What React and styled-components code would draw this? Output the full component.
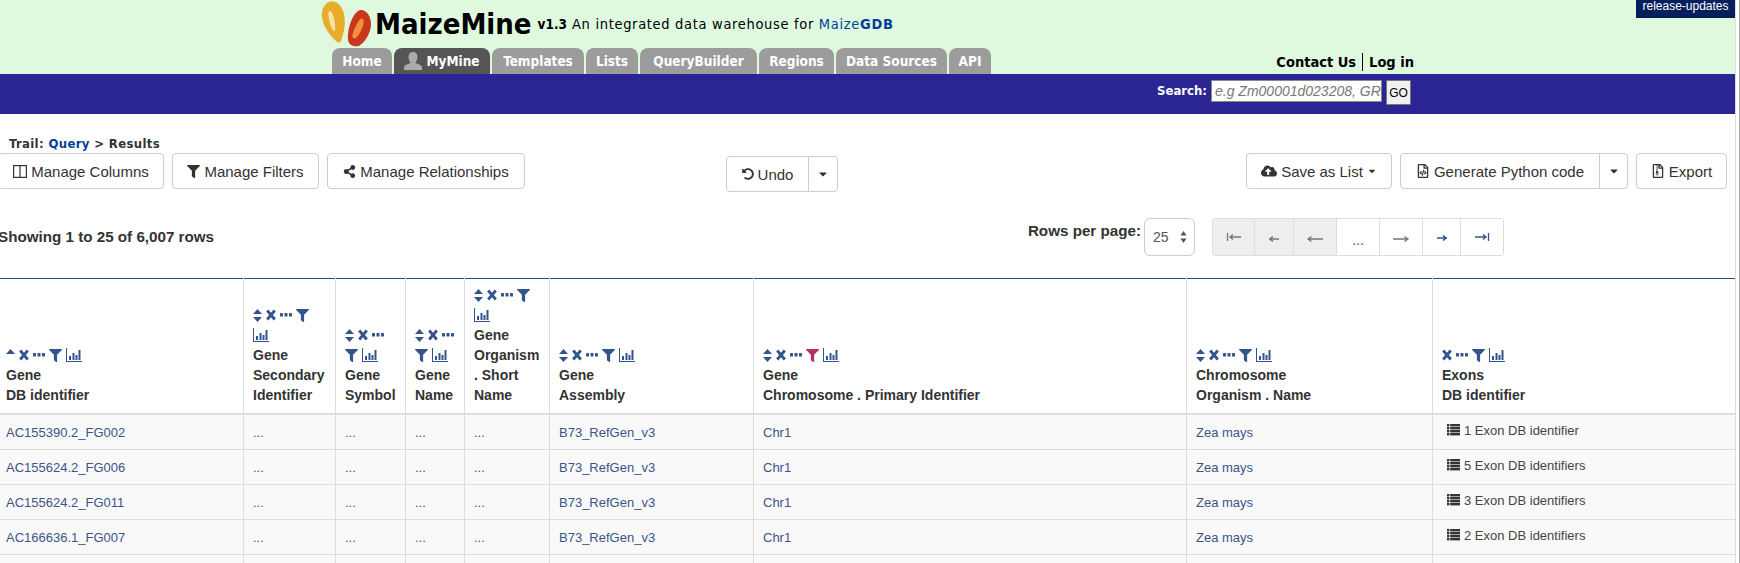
import React from 'react'
import styled, { createGlobalStyle } from 'styled-components'
import { FaFilter, FaShareAlt, FaUndoAlt, FaCloudUploadAlt, FaRegFileCode, FaRegFileArchive, FaCaretDown } from 'react-icons/fa'

const GlobalStyle = createGlobalStyle`
  html, body {
    margin: 0;
    height: 563px;
    overflow: hidden;
    background: #fff;
    font-family: "Liberation Sans", Arial, sans-serif;
    color: #333;
  }
`;

const LUCIDA = `"DejaVu Sans Condensed", "DejaVu Sans", sans-serif`;

const Page = styled.div`
  position: relative;
  width: 1740px;
  height: 563px;
  overflow: hidden;
`;

const TopBand = styled.div`
  display: flex;
  justify-content: space-between;
  width: 1735px;
  height: 74px;
  padding-left: 321px;
  box-sizing: border-box;
  background: #dff9df;
`;

const BrandBlock = styled.div`
  display: flex;
  flex-direction: column;
`;

const BrandRow = styled.div`
  display: flex;
  align-items: center;
  height: 48px;
`;

const Title = styled.span`
  font-family: ${LUCIDA};
  font-weight: bold;
  font-size: 29px;
  color: #000;
  margin-left: -3px;
`;

const Tagline = styled.span`
  font-family: ${LUCIDA};
  font-size: 14.5px;
  letter-spacing: 0.68px;
  color: #000;
  margin-left: 6px;
`;

const Version = styled.b`
  font-size: 13.5px;
  letter-spacing: 0;
  margin-right: 5px;
`;

const GdbLink = styled.a`
  color: #003f99;
`;

const Tabs = styled.nav`
  display: flex;
  gap: 2px;
  margin-left: 11px;
  height: 26px;
`;

const Tab = styled.a`
  display: flex;
  align-items: center;
  gap: 4px;
  width: ${p => p.$w}px;
  justify-content: center;
  box-sizing: border-box;
  border-radius: 8px 8px 0 0;
  font-family: ${LUCIDA};
  font-weight: bold;
  font-size: 13.5px;
  color: #fff;
  background: ${p => (p.$active ? '#555' : '#9c9c9c')};
`;

const ContactLinks = styled.div`
  display: flex;
  align-items: center;
  align-self: flex-end;
  height: 18px;
  margin-right: 321px;
  margin-bottom: 3px;
  font-family: ${LUCIDA};
  font-weight: bold;
  font-size: 14.5px;
  color: #000;
`;

const ContactDivider = styled.span`
  width: 1px;
  height: 18px;
  margin: 0 6px;
  background: #000;
`;

const SearchBand = styled.div`
  display: flex;
  align-items: flex-start;
  justify-content: flex-end;
  width: 1735px;
  height: 40px;
  padding: 6px 324px 0 0;
  box-sizing: border-box;
  background: #2b2594;
`;

const SearchLabel = styled.label`
  font-family: ${LUCIDA};
  font-weight: bold;
  font-size: 13px;
  line-height: 22px;
  color: #fff;
  margin-right: 4px;
`;

const SearchInput = styled.input`
  width: 171px;
  height: 22px;
  box-sizing: border-box;
  padding: 0 0 0 3px;
  font-family: "Liberation Sans", sans-serif;
  font-style: italic;
  font-size: 14px;
  background: #fff;
  border: 1px solid #888;
  border-radius: 0;
  &::placeholder {
    color: #777;
    opacity: 1;
  }
`;

const GoButton = styled.button`
  width: 25px;
  height: 25px;
  margin-left: 4px;
  padding: 0;
  font-family: "Liberation Sans", sans-serif;
  font-size: 12px;
  color: #000;
  background: #f0f0f0;
  border: 1px solid #777;
`;

const ReleaseTag = styled.a`
  position: absolute;
  top: 0;
  left: 1636px;
  width: 99px;
  height: 18px;
  text-align: center;
  font-size: 12px;
  line-height: 13px;
  color: #fff;
  background: #03205c;
`;

const EdgeLine = styled.div`
  position: absolute;
  top: 0;
  left: 1735px;
  width: 3px;
  height: 563px;
  background: #fff;
  border-left: 1px solid #ddd;
  border-right: 1px solid #aaa;
`;

const Content = styled.main`
  margin-left: -2px;
  width: 1737px;
`;

const Trail = styled.div`
  height: 39px;
  padding: 21px 0 0 11px;
  box-sizing: border-box;
  font-family: ${LUCIDA};
  font-weight: bold;
  font-size: 13px;
  letter-spacing: 0.35px;
  line-height: 18px;
  color: #333;
  a {
    color: #003f99;
  }
`;

const Toolbar = styled.div`
  display: flex;
  align-items: flex-start;
  padding-right: 8px;
`;

const ButtonGroup = styled.div`
  display: flex;
  gap: ${p => p.$gap || 0}px;
  margin-left: ${p => (p.$push ? 'auto' : `${p.$left || 0}px`)};
  margin-top: ${p => p.$top || 0}px;
`;

const Btn = styled.button`
  display: flex;
  align-items: center;
  justify-content: center;
  gap: 4px;
  width: ${p => p.$w}px;
  height: 36px;
  padding: 0;
  box-sizing: border-box;
  font-family: "Liberation Sans", sans-serif;
  font-size: 15px;
  color: #333;
  background: #fff;
  border: 1px solid #ccc;
  border-radius: ${p => p.$radius || '4px'};
  margin-left: ${p => (p.$joined ? '-1px' : '0')};
  svg {
    flex: none;
  }
`;

const ListRow = styled.div`
  display: flex;
  align-items: flex-start;
  margin-top: 26px;
  padding-right: 231px;
`;

const Showing = styled.div`
  flex: 1;
  font-weight: bold;
  font-size: 15.2px;
  line-height: 20px;
  margin-top: 9px;
`;

const RowsLabel = styled.span`
  font-weight: bold;
  font-size: 15.2px;
  line-height: 20px;
  margin-top: 3px;
  margin-right: 3px;
`;

const RowsSelect = styled.div`
  display: flex;
  align-items: center;
  justify-content: space-between;
  width: 51px;
  height: 38px;
  padding: 0 7px 0 8px;
  box-sizing: border-box;
  font-size: 14px;
  color: #555;
  background: #fff;
  border: 1px solid #ccc;
  border-radius: 6px;
`;

const Pager = styled.div`
  display: flex;
  height: 38px;
  margin-left: 17px;
  box-sizing: border-box;
  border: 1px solid #ddd;
  border-radius: 3px;
`;

const PagerItem = styled.div`
  display: flex;
  align-items: center;
  justify-content: center;
  box-sizing: border-box;
  width: ${p => p.$w}px;
  font-size: 14px;
  color: ${p => (p.$live ? '#34558b' : '#777')};
  background: ${p => (p.$off ? '#eee' : '#fff')};
  border-left: ${p => (p.$first ? 'none' : '1px solid #ddd')};
  padding-top: ${p => p.$drop || 0}px;
`;

const Table = styled.table`
  table-layout: fixed;
  width: 1739px;
  margin: 22px 0 0 -2px;
  border-collapse: collapse;
  border-top: 1px solid #1f4b82;
`;

const HeadCell = styled.th`
  padding: 6px 9px 8px;
  vertical-align: bottom;
  text-align: left;
  font-size: 14px;
  line-height: 20px;
  font-weight: bold;
  color: #333;
  border: 1px solid #ddd;
  border-top: none;
  border-bottom: 2px solid #ddd;
`;

const ToolRow = styled.div`
  display: flex;
  align-items: center;
  gap: 4px;
  height: 20px;
  color: #34558b;
`;

const BodyRow = styled.tr`
  height: 35px;
  background: #f9f9f9;
`;

const Cell = styled.td`
  padding: 2px 9px 0;
  font-size: 13px;
  color: ${p => (p.$link ? '#3b5588' : '#555')};
  border: 1px solid #ddd;
  box-sizing: border-box;
  overflow: hidden;
  white-space: nowrap;
`;

const ExonLabel = styled.span`
  display: flex;
  align-items: center;
  gap: 4px;
  margin: -5px 0 0 5px;
  color: #444;
`;

const SeedIcon = () => (
  <svg width="57" height="46" viewBox="0 0 57 46">
    <path d="M8 1C15-1 21 4 23 13c2 9 0 19-3 27-1 2-3 2-5 0C9 34 2 26 1 16 0 9 3 3 8 1z" fill="#e9ac2a" />
    <path d="M8 10c3-1 5 6 6 13 0 5 1 7-1 7-3-2-7-16-5-20z" fill="#f8e3b0" />
    <path d="M39 9c6-1 11 6 11 14 0 9-6 18-12 22-4 1-10 0-11-6-1-10 4-27 12-30z" fill="#c8381c" />
    <path d="M42 18c2 3-1 12-6 18-3 3-6 1-4-4 2-6 7-17 10-14z" fill="#f5903f" />
  </svg>
);

const PersonIcon = () => (
  <svg width="18" height="18" viewBox="0 0 18 18">
    <path d="M9 0c3 0 4.500 2 4.500 5S12 9.500 11.500 11c2.500 1 6.500 2 6.500 4.500V18H0v-2.500C0 13 4 12 6.500 11 6 9.500 4.500 8 4.500 5S6 0 9 0z" fill="#aaa" />
  </svg>
);

const SortIcon = ({ upOnly }) => (
  <svg width="9" height="13" viewBox="0 0 9 13" fill="currentColor">
    <path d="M4.500 0 9 5H0z" />
    {!upOnly && <path d="M4.500 13 9 8H0z" />}
  </svg>
);

const CrossIcon = () => (
  <svg width="10" height="12" viewBox="0 0 10 12" fill="none" stroke="currentColor" strokeWidth="2.800">
    <path d="M1.200 1.500 8.800 10.500M8.800 1.500 1.200 10.500" />
  </svg>
);

const DotsIcon = () => (
  <svg width="12" height="4" viewBox="0 0 12 4" fill="currentColor">
    <rect width="3" height="3.500" rx=".6" />
    <rect x="4.500" width="3" height="3.500" rx=".6" />
    <rect x="9" width="3" height="3.500" rx=".6" />
  </svg>
);

const ChartIcon = () => (
  <svg width="16" height="14" viewBox="0 0 16 14" fill="currentColor">
    <rect width="1" height="14" />
    <rect y="13" width="16" height="1" />
    <rect x="3" y="8" width="2" height="4" />
    <rect x="6.500" y="5" width="2" height="7" />
    <rect x="9.500" y="7" width="2" height="5" />
    <rect x="12.500" y="2" width="2" height="10" />
  </svg>
);

const ColumnsIcon = () => (
  <svg width="14" height="13" viewBox="0 0 14 13" fill="none" stroke="#333" strokeWidth="1.200">
    <rect x=".6" y=".6" width="12.800" height="11.800" />
    <path d="M7 .6v11.800" />
  </svg>
);

const ListIcon = () => (
  <svg width="13" height="12" viewBox="0 0 13 12" fill="#333">
    {[0, 3, 6, 9].map((y) => (
      <React.Fragment key={y}>
        <rect y={y} width="2.400" height="2.400" />
        <rect x="3.200" y={y} width="9.800" height="2.400" />
      </React.Fragment>
    ))}
  </svg>
);

const StepIcon = ({ dir, kind }) => {
  const flip = dir === 'right' ? 'translate(18 0) scale(-1 1)' : undefined;
  return (
    <svg width="18" height="10" viewBox="0 0 18 10" fill="none" stroke="currentColor" strokeWidth="1.300">
      <g transform={flip}>
        {kind === 'edge' && <path d="M2.500 1v8M5 5h11M8 2.500 5 5l3 2.500" />}
        {kind === 'small' && <path d="M4 5h10M8 2.500 5 5l3 2.500" strokeWidth="1.600" />}
        {kind === 'long' && <path d="M2 5h15M5.500 2.500 2 5l3.500 2.500" />}
      </g>
    </svg>
  );
};

const toolIcons = {
  sort: <SortIcon />,
  up: <SortIcon upOnly />,
  x: <CrossIcon />,
  dots: <DotsIcon />,
  filter: <FaFilter size={13} />,
  pink: <FaFilter size={13} color="#b5305f" />,
  chart: <ChartIcon />,
};

const columns = [
  { width: 247, tools: [['up', 'x', 'dots', 'filter', 'chart']], cls: 'Gene', attr: 'DB identifier' },
  { width: 92, tools: [['sort', 'x', 'dots', 'filter'], ['chart']], cls: 'Gene', attr: 'Secondary Identifier' },
  { width: 70, tools: [['sort', 'x', 'dots'], ['filter', 'chart']], cls: 'Gene', attr: 'Symbol' },
  { width: 59, tools: [['sort', 'x', 'dots'], ['filter', 'chart']], cls: 'Gene', attr: 'Name' },
  { width: 85, tools: [['sort', 'x', 'dots', 'filter'], ['chart']], cls: 'Gene', attr: 'Organism . Short Name' },
  { width: 204, tools: [['sort', 'x', 'dots', 'filter', 'chart']], cls: 'Gene', attr: 'Assembly' },
  { width: 433, tools: [['sort', 'x', 'dots', 'pink', 'chart']], cls: 'Gene', attr: 'Chromosome . Primary Identifier' },
  { width: 246, tools: [['sort', 'x', 'dots', 'filter', 'chart']], cls: 'Chromosome', attr: 'Organism . Name' },
  { width: 303, tools: [['x', 'dots', 'filter', 'chart']], cls: 'Exons', attr: 'DB identifier' },
];

const rows = [
  ['AC155390.2_FG002', '1 Exon DB identifier'],
  ['AC155624.2_FG006', '5 Exon DB identifiers'],
  ['AC155624.2_FG011', '3 Exon DB identifiers'],
  ['AC166636.1_FG007', '2 Exon DB identifiers'],
];

const tabs = [
  { title: 'Home', w: 60 },
  { title: 'MyMine', w: 96, active: true },
  { title: 'Templates', w: 92 },
  { title: 'Lists', w: 52 },
  { title: 'QueryBuilder', w: 117 },
  { title: 'Regions', w: 75 },
  { title: 'Data Sources', w: 111 },
  { title: 'API', w: 42 },
];

const App = () => {
  return (
    <Page>
      <GlobalStyle />
      <TopBand>
        <BrandBlock>
          <BrandRow>
            <SeedIcon />
            <Title>MaizeMine</Title>
            <Tagline>
              <Version>v1.3</Version>An integrated data warehouse for <GdbLink>Maize<b>GDB</b></GdbLink>
            </Tagline>
          </BrandRow>
          <Tabs>
            {tabs.map(({ title, w, active }) => (
              <Tab key={title} $w={w} $active={active}>
                {active && <PersonIcon />}
                {title}
              </Tab>
            ))}
          </Tabs>
        </BrandBlock>
        <ContactLinks>
          Contact Us<ContactDivider />Log in
        </ContactLinks>
      </TopBand>
      <SearchBand>
        <SearchLabel>Search:</SearchLabel>
        <SearchInput placeholder="e.g Zm00001d023208, GRMZM2G" />
        <GoButton>GO</GoButton>
      </SearchBand>
      <ReleaseTag>release-updates</ReleaseTag>
      <EdgeLine />

      <Content>
        <Trail>Trail: <a>Query</a> &gt; Results</Trail>
        <Toolbar>
          <ButtonGroup $gap={8}>
            <Btn $w={166}><ColumnsIcon />Manage Columns</Btn>
            <Btn $w={147}><FaFilter size={13} />Manage Filters</Btn>
            <Btn $w={198}><FaShareAlt size={13} />Manage Relationships</Btn>
          </ButtonGroup>
          <ButtonGroup $left={201} $top={3}>
            <Btn $w={83} $radius="4px 0 0 4px"><FaUndoAlt size={12} />Undo</Btn>
            <Btn $w={30} $joined $radius="0 4px 4px 0"><FaCaretDown size={12} /></Btn>
          </ButtonGroup>
          <ButtonGroup $gap={8} $push>
            <Btn $w={146}><FaCloudUploadAlt size={16} />Save as List<FaCaretDown size={10} /></Btn>
            <ButtonGroup>
              <Btn $w={200} $radius="4px 0 0 4px"><FaRegFileCode size={14} />Generate Python code</Btn>
              <Btn $w={29} $joined $radius="0 4px 4px 0"><FaCaretDown size={12} /></Btn>
            </ButtonGroup>
            <Btn $w={91}><FaRegFileArchive size={14} />Export</Btn>
          </ButtonGroup>
        </Toolbar>
        <ListRow>
          <Showing>Showing 1 to 25 of 6,007 rows</Showing>
          <RowsLabel>Rows per page:</RowsLabel>
          <RowsSelect>
            25
            <svg width="7" height="14" viewBox="0 0 7 14" fill="#555">
              <path d="M3.500 1 6.500 5.500H.5zM3.500 13 .5 8.500h6z" />
            </svg>
          </RowsSelect>
          <Pager>
            <PagerItem $w={41} $off $first><StepIcon kind="edge" /></PagerItem>
            <PagerItem $w={39} $off $drop={3}><StepIcon kind="small" /></PagerItem>
            <PagerItem $w={43} $off $drop={3}><StepIcon kind="long" /></PagerItem>
            <PagerItem $w={43} $live $drop={6}>...</PagerItem>
            <PagerItem $w={43} $drop={3}><StepIcon kind="long" dir="right" /></PagerItem>
            <PagerItem $w={38} $live $drop={2}><StepIcon kind="small" dir="right" /></PagerItem>
            <PagerItem $w={43} $live><StepIcon kind="edge" dir="right" /></PagerItem>
          </Pager>
        </ListRow>
        <Table>
          <colgroup>
            {columns.map(({ width }, i) => <col key={i} width={width} />)}
          </colgroup>
          <thead>
            <tr>
              {columns.map(({ tools, cls, attr }, i) => (
                <HeadCell key={i}>
                  {tools.map((line, j) => (
                    <ToolRow key={j}>
                      {line.map((name) => <React.Fragment key={name}>{toolIcons[name]}</React.Fragment>)}
                    </ToolRow>
                  ))}
                  <div>{cls}</div>
                  <div>{attr}</div>
                </HeadCell>
              ))}
            </tr>
          </thead>
          <tbody>
            {rows.map(([id, exons]) => (
              <BodyRow key={id}>
                <Cell $link>{id}</Cell>
                <Cell>...</Cell>
                <Cell>...</Cell>
                <Cell>...</Cell>
                <Cell>...</Cell>
                <Cell $link>B73_RefGen_v3</Cell>
                <Cell $link>Chr1</Cell>
                <Cell $link>Zea mays</Cell>
                <Cell><ExonLabel><ListIcon />{exons}</ExonLabel></Cell>
              </BodyRow>
            ))}
            <BodyRow>
              {columns.map((_, i) => <Cell key={i} />)}
            </BodyRow>
          </tbody>
        </Table>
      </Content>
    </Page>
  )
}

export default App
